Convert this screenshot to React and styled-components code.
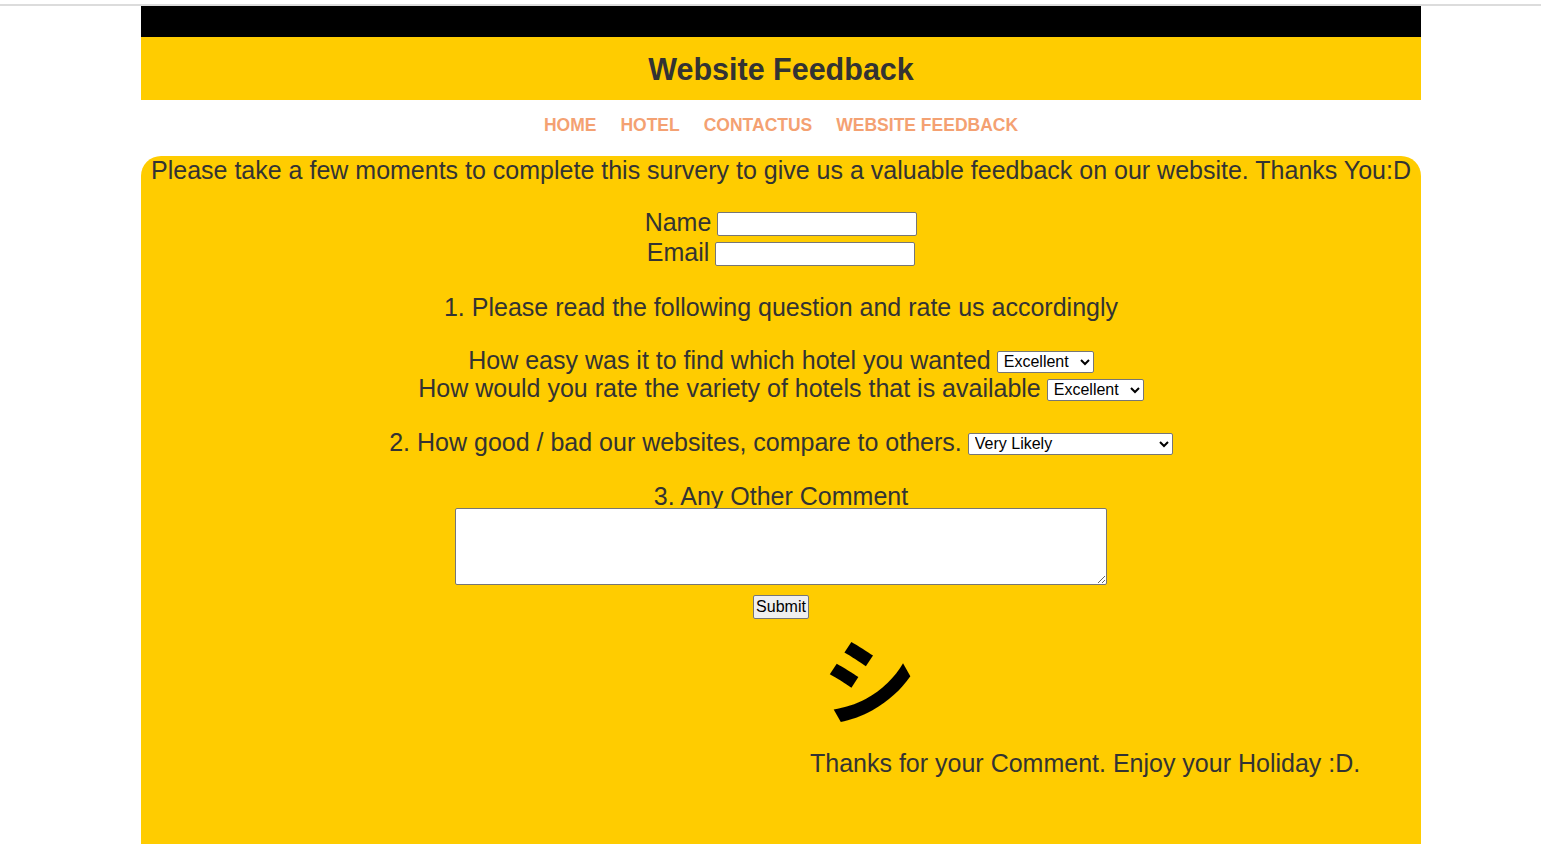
import styled, { createGlobalStyle } from 'styled-components';

const GlobalStyle = createGlobalStyle`
  body {
    margin: 0;
    background: #ffffff;
    font-family: "Liberation Sans", Arial, sans-serif;
    color: #333333;
    overflow: hidden;
  }
`;

export default function App() {
  return (
    <>
      <GlobalStyle />
      <TopRule />
      <Page>
        <BlackBar />
        <Header>
          <Title>Website Feedback</Title>
        </Header>

        <Nav>
          <NavLink href="#">HOME</NavLink>
          <NavLink href="#">HOTEL</NavLink>
          <NavLink href="#">CONTACTUS</NavLink>
          <NavLink href="#">WEBSITE FEEDBACK</NavLink>
        </Nav>

        <Main>
          <Intro>
            Please take a few moments to complete this survery to give us a valuable feedback on our website. Thanks You:D
          </Intro>

          <Form action="/">
            <Field>
              <label>Name</label> <TextInput type="text" />
            </Field>
            <Field>
              <label>Email</label> <TextInput type="email" />
            </Field>

            <Question $top={26}>1. Please read the following question and rate us accordingly</Question>

            <Rating $top={25}>
              How easy was it to find which hotel you wanted{' '}
              <Select $width={97} defaultValue="excellent">
                <option value="excellent">Excellent</option>
                <option value="good">Good</option>
                <option value="poor">Poor</option>
              </Select>
            </Rating>
            <Rating>
              How would you rate the variety of hotels that is available{' '}
              <Select $width={97} defaultValue="excellent">
                <option value="excellent">Excellent</option>
                <option value="good">Good</option>
                <option value="poor">Poor</option>
              </Select>
            </Rating>

            <Rating $top={26}>
              2. How good / bad our websites, compare to others.{' '}
              <Select $width={205} defaultValue="very">
                <option value="very">Very Likely</option>
                <option value="likely">Likely</option>
                <option value="unlikely">Unlikely</option>
              </Select>
            </Rating>

            <Question $top={26}>3. Any Other Comment</Question>
            <Comment />
            <SubmitButton type="submit">Submit</SubmitButton>
          </Form>

          <Smiley>シ</Smiley>
          <Thanks>Thanks for your Comment. Enjoy your Holiday :D.</Thanks>
        </Main>
      </Page>
    </>
  );
}

const TopRule = styled.div`
  margin-top: 4px;
  height: 2px;
  background: #dcdcdc;
`;

const Page = styled.div`
  width: 1280px;
  margin-left: 141px;
`;

const BlackBar = styled.div`
  height: 31px;
  background: #000000;
`;

const Header = styled.header`
  height: 63px;
  background: #ffcc00;
  display: flex;
  align-items: center;
  justify-content: center;
`;

const Title = styled.h1`
  margin: 0;
  font-size: 30.5px;
  font-weight: 700;
  color: #333333;
  transform: translateY(1px);
`;

const Nav = styled.nav`
  height: 56px;
  display: flex;
  align-items: center;
  justify-content: center;
  gap: 24px;
`;

const NavLink = styled.a`
  font-size: 17.5px;
  font-weight: 700;
  color: #f4a172;
  text-decoration: none;
  transform: translateY(-3px);
`;

const Main = styled.main`
  background: #ffcc00;
  border-radius: 20px 20px 0 0;
  text-align: center;
  font-size: 25px;
  min-height: 720px;
`;

const Intro = styled.p`
  margin: 0;
  line-height: 28px;
`;

const Form = styled.form`
  display: flex;
  flex-direction: column;
  align-items: center;
  margin-top: 23px;
`;

const Field = styled.div`
  height: 30px;
  display: flex;
  align-items: center;
  gap: 6px;
`;

const TextInput = styled.input`
  width: 200px;
  height: 24px;
  box-sizing: border-box;
  border: 1px solid #767676;
  border-radius: 2px;
  background: #ffffff;
  font-size: 16px;
  margin-top: 4px;
`;

const Question = styled.div`
  line-height: 28px;
  margin-top: ${(p) => p.$top || 0}px;
`;

const Rating = styled.div`
  height: 28px;
  display: flex;
  align-items: center;
  gap: 6px;
  margin-top: ${(p) => p.$top || 0}px;
`;

const Select = styled.select`
  font-family: "Liberation Sans", Arial, sans-serif;
  font-size: 16px;
  height: 22px;
  width: ${(p) => (p.$width ? `${p.$width}px` : 'auto')};
  padding: 0 2px;
  border: 1px solid #767676;
  border-radius: 2px;
  background: #ffffff;
  color: #000000;
  margin-top: 3px;
`;

const Comment = styled.textarea`
  width: 652px;
  height: 77px;
  box-sizing: border-box;
  border: 1px solid #767676;
  border-radius: 2px;
  background: #ffffff;
  margin: -2px 0 0;
`;

const SubmitButton = styled.button`
  margin-top: 10px;
  height: 24px;
  padding: 1px 2px;
  font-family: "Liberation Sans", Arial, sans-serif;
  font-size: 16px;
  color: #000000;
  background: #efefef;
  border: 1px solid #767676;
  border-radius: 2px;
`;

const Smiley = styled.div`
  text-align: left;
  padding-left: 681px;
  margin-top: 4px;
  font-family: "Noto Sans CJK JP", sans-serif;
  font-size: 95px;
  font-weight: 700;
  line-height: 108px;
  color: #000000;
`;

const Thanks = styled.p`
  text-align: left;
  padding-left: 669px;
  margin: 18px 0 0;
  line-height: 28px;
`;
